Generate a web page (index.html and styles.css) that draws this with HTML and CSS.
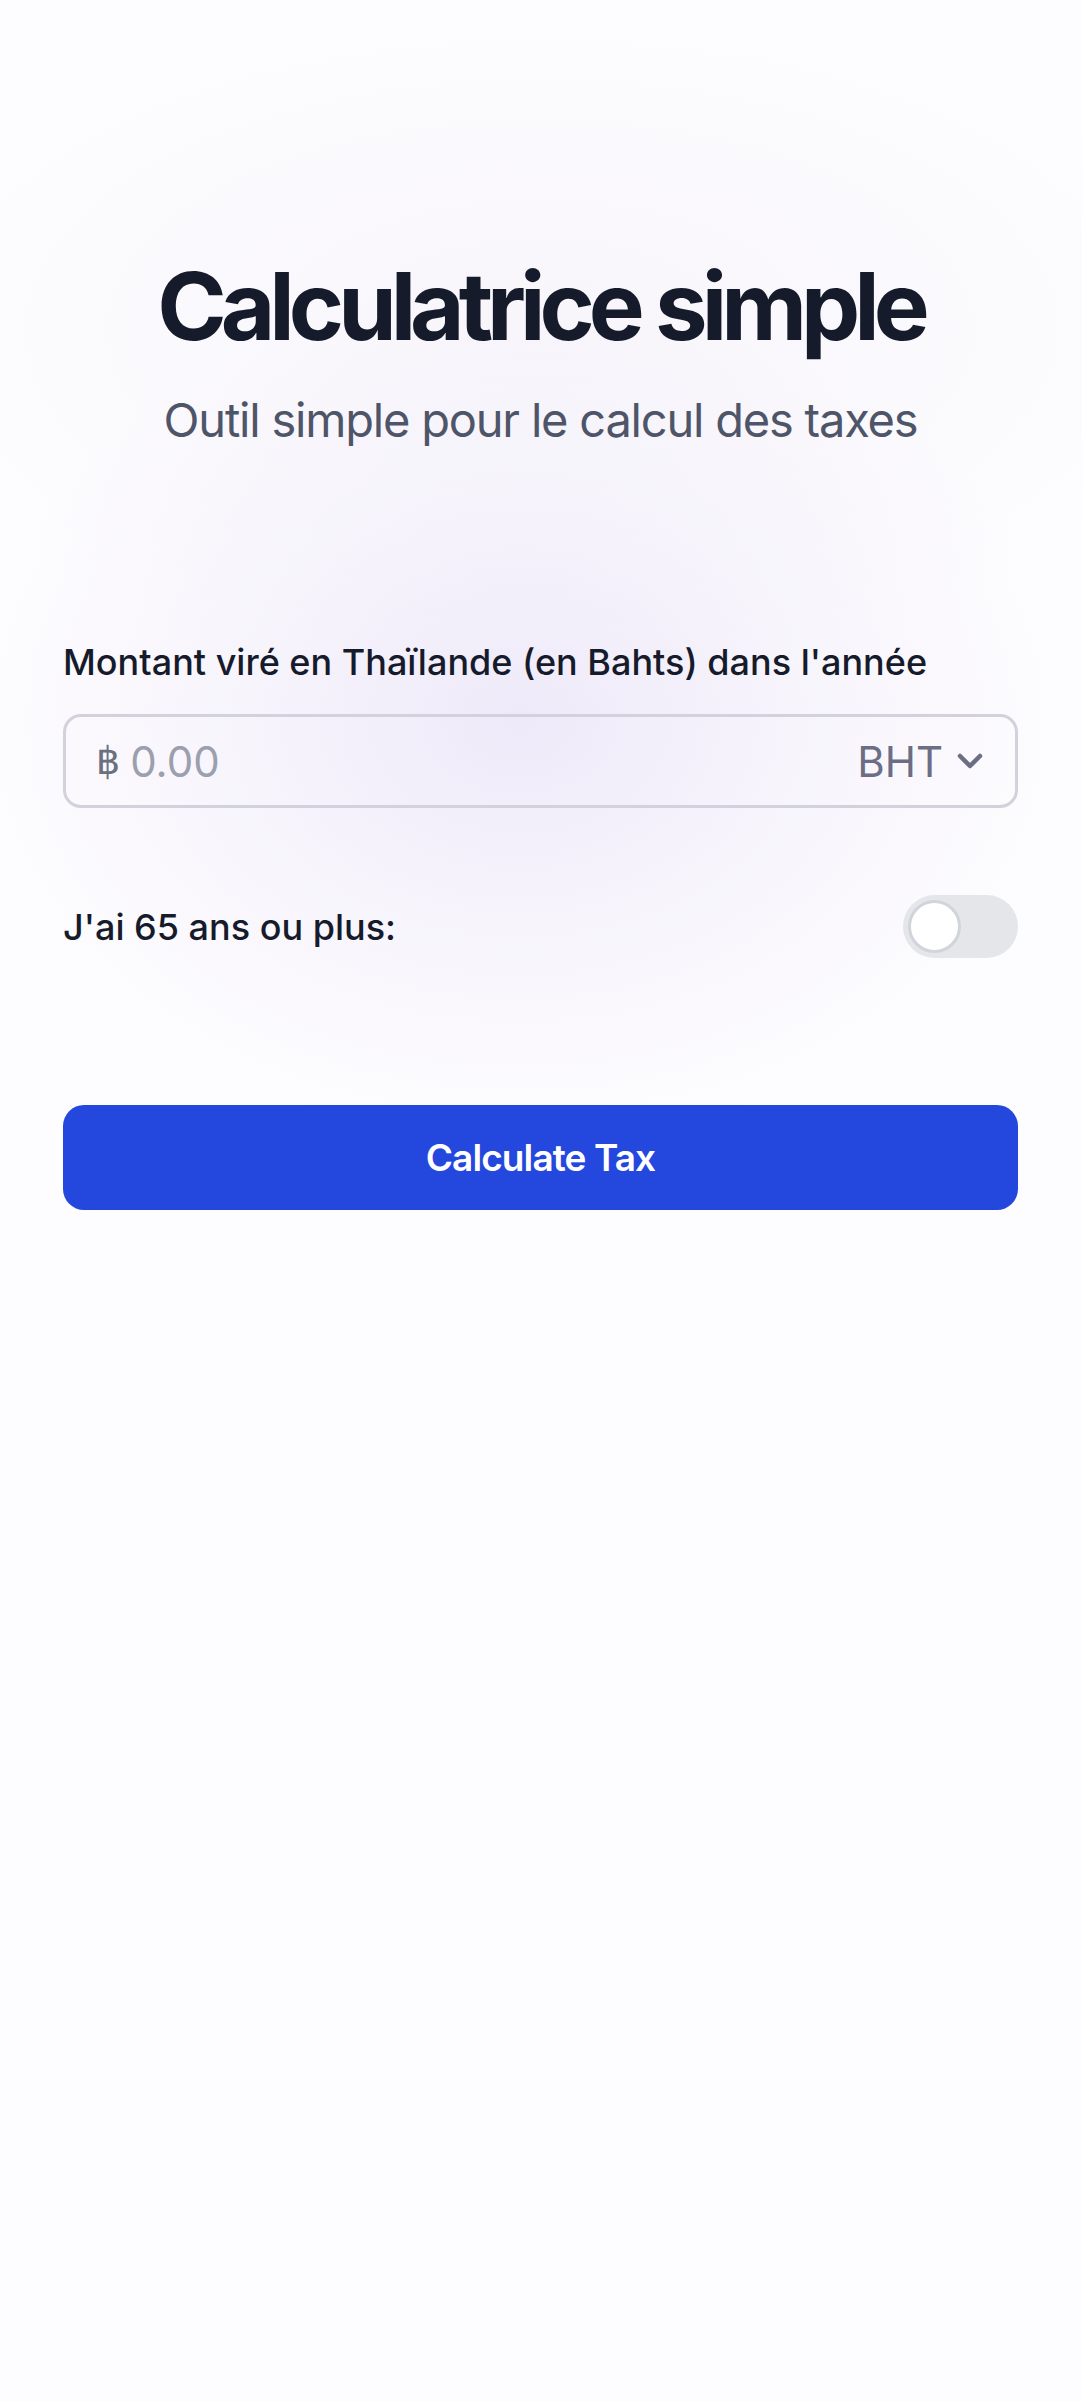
FILE: index.html
```html
<!DOCTYPE html>
<html lang="fr">
<head>
<meta charset="utf-8">
<title>Calculatrice simple</title>
<link rel="stylesheet" href="styles.css">
</head>
<body>
<main class="page">
  <header class="hero">
    <h1 class="title">Calculatrice simple</h1>
    <p class="subtitle">Outil simple pour le calcul des taxes</p>
  </header>
  <form class="form">
    <label class="field-label">Montant viré en Thaïlande (en Bahts) dans l'année</label>
    <div class="amount-input">
      <span class="currency-sign">฿</span>
      <span class="placeholder">0.00</span>
      <span class="unit">BHT
        <svg class="chevron" width="30" height="30" viewBox="0 0 30 30" aria-hidden="true"><polyline points="5,10 15,20 25,10" fill="none" stroke="currentColor" stroke-width="4.5" stroke-linecap="round" stroke-linejoin="round"/></svg>
      </span>
    </div>
    <div class="toggle-row">
      <span class="toggle-label">J'ai 65 ans ou plus:</span>
      <span class="switch"><span class="knob"></span></span>
    </div>
    <button type="button" class="submit">Calculate Tax</button>
  </form>
</main>
</body>
</html>
```
FILE: styles.css
```css
html, body {
  margin: 0;
  padding: 0;
}
body {
  min-height: 2402px;
  font-family: Inter, "Noto Sans", "Liberation Sans", sans-serif;
  color: #161b2c;
  background-color: #fdfcfe;
  background-image:
    radial-gradient(ellipse 560px 420px at 520px 720px, rgba(236, 230, 248, 0.85), rgba(240, 236, 250, 0.35) 60%, rgba(253, 252, 254, 0) 100%),
    radial-gradient(ellipse 700px 340px at 541px 330px, rgba(246, 244, 250, 0.8), rgba(253, 252, 254, 0) 100%);
  background-repeat: no-repeat;
}
.page {
  padding: 259px 64px 0 63px;
}
.hero {
  display: flex;
  flex-direction: column;
  align-items: center;
}
.title {
  margin: 0;
  font-size: 94px;
  line-height: 94px;
  font-weight: 700;
  letter-spacing: -6px;
  color: #161b2c;
}
.subtitle {
  margin: 34px 0 0;
  font-size: 47px;
  line-height: 66px;
  font-weight: 400;
  letter-spacing: -1.2px;
  color: #4f5569;
}
.form {
  display: flex;
  flex-direction: column;
  margin-top: 184px;
}
.field-label {
  font-size: 36px;
  line-height: 50px;
  font-weight: 500;
  color: #161b2c;
}
.amount-input {
  margin-top: 27px;
  height: 94px;
  box-sizing: border-box;
  border: 3px solid #d3d1dc;
  border-radius: 18px;
  display: flex;
  align-items: center;
  padding: 0 30px 0 30px;
  font-size: 42px;
}
.currency-sign {
  color: #6b7080;
  font-family: "DejaVu Sans", sans-serif;
  font-size: 38px;
}
.placeholder {
  margin-left: 10px;
  color: #9b9fae;
}
.unit {
  margin-left: auto;
  display: flex;
  align-items: center;
  gap: 12px;
  color: #6b6e84;
}
.chevron {
  display: block;
}
.toggle-row {
  margin-top: 87px;
  display: flex;
  align-items: center;
  justify-content: space-between;
  height: 63px;
}
.toggle-label {
  font-size: 36px;
  line-height: 50px;
  font-weight: 500;
}
.switch {
  position: relative;
  width: 115px;
  height: 63px;
  border-radius: 32px;
  background: #e5e6ea;
}
.knob {
  position: absolute;
  left: 5px;
  top: 5px;
  width: 53px;
  height: 53px;
  box-sizing: border-box;
  border-radius: 50%;
  background: #ffffff;
  border: 3px solid #d2d4db;
}
.submit {
  margin-top: 147px;
  height: 105px;
  border: none;
  border-radius: 21px;
  background: #2447dd;
  color: #ffffff;
  font-family: Inter, "Noto Sans", sans-serif;
  font-size: 37px;
  font-weight: 600;
  letter-spacing: -0.9px;
}
```
